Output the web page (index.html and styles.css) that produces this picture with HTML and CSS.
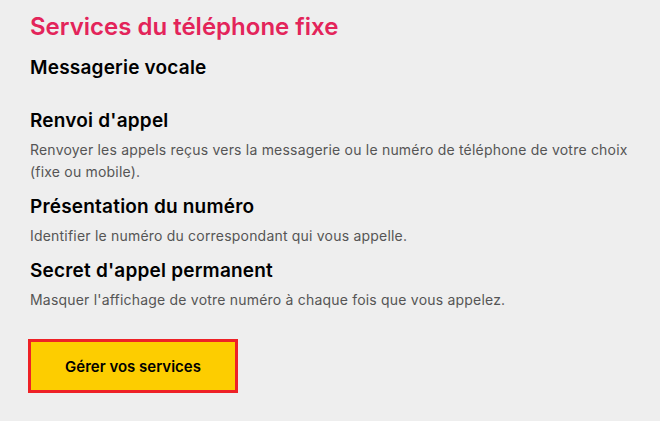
FILE: index.html
```html
<!DOCTYPE html>
<html lang="fr">
<head>
<meta charset="utf-8">
<title>Services du téléphone fixe</title>
<link rel="stylesheet" href="styles.css">
</head>
<body>
<main class="page">
  <h1 class="title">Services du téléphone fixe</h1>
  <section class="service service-first">
    <h2 class="service-name">Messagerie vocale</h2>
  </section>
  <section class="service">
    <h2 class="service-name">Renvoi d'appel</h2>
    <p class="service-desc">Renvoyer les appels reçus vers la messagerie ou le numéro de téléphone de votre choix (fixe ou mobile).</p>
  </section>
  <section class="service">
    <h2 class="service-name">Présentation du numéro</h2>
    <p class="service-desc">Identifier le numéro du correspondant qui vous appelle.</p>
  </section>
  <section class="service">
    <h2 class="service-name">Secret d'appel permanent</h2>
    <p class="service-desc">Masquer l'affichage de votre numéro à chaque fois que vous appelez.</p>
  </section>
  <div class="actions">
    <button class="btn" type="button">Gérer vos services</button>
  </div>
</main>
</body>
</html>
```
FILE: styles.css
```css
html, body {
  margin: 0;
  padding: 0;
  background: #eeeeee;
}
body {
  font-family: "Inter", "Liberation Sans", sans-serif;
  color: #000;
}
.page {
  padding: 12px 10px 0 30px;
  display: flex;
  flex-direction: column;
}
.title {
  margin: 0;
  font-size: 24px;
  line-height: 30px;
  font-weight: 600;
  color: #e3245a;
}
.service {
  display: flex;
  flex-direction: column;
  margin-top: 12px;
}
.service-first {
  margin-top: 14px;
  margin-bottom: 17px;
}
.service-name {
  margin: 0;
  font-size: 19px;
  line-height: 24px;
  font-weight: 600;
  letter-spacing: 0.2px;
  color: #000;
}
.service-desc {
  margin: 6px 0 0 0;
  font-size: 14px;
  line-height: 22px;
  letter-spacing: 0.2px;
  color: #555555;
}
.actions {
  margin-top: 28px;
  display: flex;
}
.btn {
  margin-left: -2px;
  width: 210px;
  height: 54px;
  background: #fdcd00;
  border: 3px solid #ee2126;
  font-family: inherit;
  font-size: 15px;
  font-weight: 600;
  color: #000;
  cursor: pointer;
}
```
